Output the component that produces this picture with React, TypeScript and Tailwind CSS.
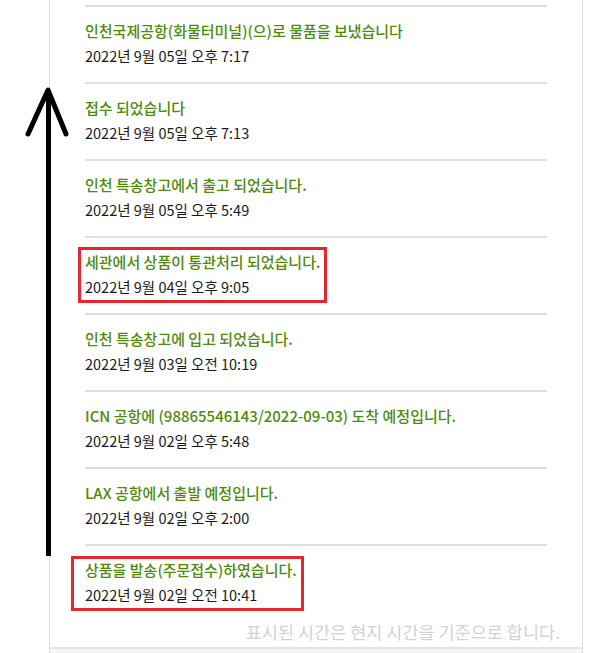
import React from 'react';

type Step = {
  title: string;
  time: string;
  mark?: 'wide' | 'narrow';
};

const steps: Step[] = [
  { title: '인천국제공항(화물터미널)(으)로 물품을 보냈습니다', time: '2022년 9월 05일 오후 7:17' },
  { title: '접수 되었습니다', time: '2022년 9월 05일 오후 7:13' },
  { title: '인천 특송창고에서 출고 되었습니다.', time: '2022년 9월 05일 오후 5:49' },
  { title: '세관에서 상품이 통관처리 되었습니다.', time: '2022년 9월 04일 오후 9:05', mark: 'narrow' },
  { title: '인천 특송창고에 입고 되었습니다.', time: '2022년 9월 03일 오전 10:19' },
  { title: 'ICN 공항에 (98865546143/2022-09-03) 도착 예정입니다.', time: '2022년 9월 02일 오후 5:48' },
  { title: 'LAX 공항에서 출발 예정입니다.', time: '2022년 9월 02일 오후 2:00' },
  { title: '상품을 발송(주문접수)하였습니다.', time: '2022년 9월 02일 오전 10:41', mark: 'wide' },
];

const StepRow: React.FC<{ step: Step; last: boolean }> = ({ step, last }) => {
  return (
    <li className={`flex border-t-2 border-[#dedede] pt-[14px] ${last ? 'pb-0' : 'pb-[16px]'}`}>
      <div className="relative flex flex-col">
        {step.mark && (
          <span
            className={`absolute border-[3px] border-[#e8242c] ${
              step.mark === 'wide'
                ? '-left-[14px] -top-[4px] -right-[7px] -bottom-[6px]'
                : '-left-[7px] -top-[5px] -right-[7px] -bottom-[6px]'
            }`}
          />
        )}
        <p className="relative text-[15px] leading-[20px] font-medium text-[#4e8a0c]">{step.title}</p>
        <p className="relative mt-[5px] text-[14.5px] leading-[20px] text-[#1a1a1a]">{step.time}</p>
      </div>
    </li>
  );
};

export default function App() {
  return (
    <div
      className="relative min-h-[653px] bg-white overflow-hidden"
      style={{ fontFamily: '"Noto Sans CJK KR", "Noto Sans", sans-serif' }}
    >
      <div className="ml-[49px] w-[534px] border-x border-[#dddddd]">
        <ul className="px-[35px] pt-[5px]">
          {steps.map((step, i) => (
            <StepRow key={i} step={step} last={i === steps.length - 1} />
          ))}
        </ul>
        <p className="pr-[22px] pt-[17px] pb-[5px] text-right text-[17.5px] leading-[20px] text-[#d2d2d2]">
          표시된 시간은 현지 시간을 기준으로 합니다.
        </p>
        <div className="border-t-2 border-[#e2e2e2] bg-[#f6f6f6] h-[12px]" />
      </div>

      {/* annotation arrow */}
      <svg className="absolute left-0 top-0 pointer-events-none" width="80" height="600" viewBox="0 0 80 600">
        <line x1="48.5" y1="92" x2="48.5" y2="556" stroke="#000" strokeWidth="5" />
        <path d="M28 134 L48 90 L66 134" fill="none" stroke="#000" strokeWidth="5" strokeLinecap="round" strokeLinejoin="round" />
      </svg>
    </div>
  );
}
